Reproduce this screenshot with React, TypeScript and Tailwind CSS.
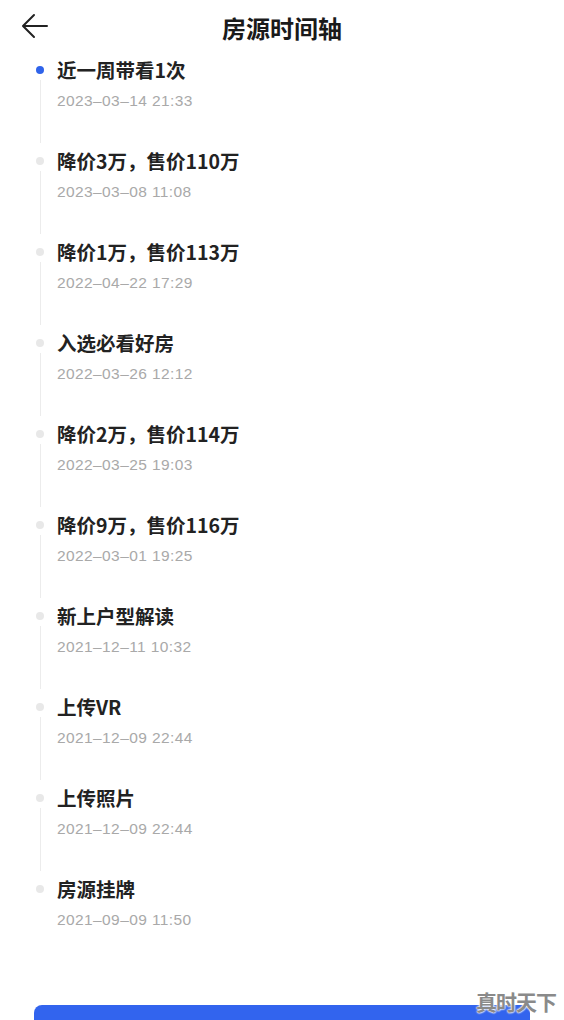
import React from "react";

const items = [
  { title: "近一周带看1次", time: "2023–03–14 21:33" },
  { title: "降价3万，售价110万", time: "2023–03–08 11:08" },
  { title: "降价1万，售价113万", time: "2022–04–22 17:29" },
  { title: "入选必看好房", time: "2022–03–26 12:12" },
  { title: "降价2万，售价114万", time: "2022–03–25 19:03" },
  { title: "降价9万，售价116万", time: "2022–03–01 19:25" },
  { title: "新上户型解读", time: "2021–12–11 10:32" },
  { title: "上传VR", time: "2021–12–09 22:44" },
  { title: "上传照片", time: "2021–12–09 22:44" },
  { title: "房源挂牌", time: "2021–09–09 11:50" },
];

export default function App() {
  return (
    <div
      className="relative w-[564px] h-[1020px] overflow-hidden bg-white text-[#222]"
      style={{ fontFamily: '"Noto Sans CJK SC", "Noto Sans", sans-serif' }}
    >
      {/* Header */}
      <div className="relative h-[56px] flex items-center justify-center">
        <button className="absolute left-[21px] top-[13px] w-[27px] h-[26px] flex items-center justify-center">
          <svg width="27" height="26" viewBox="0 0 27 26" fill="none">
            <path d="M26 13H3M13 2L2 13l11 11" stroke="#222" strokeWidth="2" strokeLinecap="round" strokeLinejoin="round" />
          </svg>
        </button>
        <h1 className="text-[24px] font-semibold leading-[32px] text-[#1a1a1a]">房源时间轴</h1>
      </div>

      {/* Timeline */}
      <div className="pl-[36px] pt-[1px]">
        {items.map((item, i) => {
          const last = i === items.length - 1;
          return (
            <div key={i} className="flex h-[91px]">
              <div className="w-[8px] flex flex-col items-center">
                <div
                  className={`mt-[9px] w-[8px] h-[8px] rounded-full ${i === 0 ? "bg-[#2f63ea]" : "bg-[#e8e8e8]"}`}
                />
                {!last && <div className="mt-[6px] mb-[5px] flex-1 w-[1px] bg-[#ececec]" />}
              </div>
              <div className="ml-[13px]">
                <div className="text-[19.5px] font-semibold leading-[26px] text-[#222]">{item.title}</div>
                <div
                  className="mt-[8px] text-[15.5px] leading-[20px] tracking-[0.4px] text-[#a9a9a9]"
                  style={{ fontFamily: '"Liberation Sans", Arial, sans-serif' }}
                >
                  {item.time}
                </div>
              </div>
            </div>
          );
        })}
      </div>

      {/* Bottom button */}
      <div className="absolute left-0 right-0 bottom-0 h-[28px] bg-gradient-to-b from-white/0 to-white" />
      <div className="absolute left-[34px] right-[34px] top-[1005px] h-[40px] rounded-t-[8px] bg-[#3264ee]" />

      {/* Watermark */}
      <div
        className="absolute left-[476px] top-[987px] text-[21px] font-bold leading-[28px] text-[#8a8a8a] tracking-[-1px]"
        style={{ textShadow: "0 0 2px #fff, 0 0 2px #fff, 0 0 2px #fff" }}
      >
        真时天下
      </div>
    </div>
  );
}
